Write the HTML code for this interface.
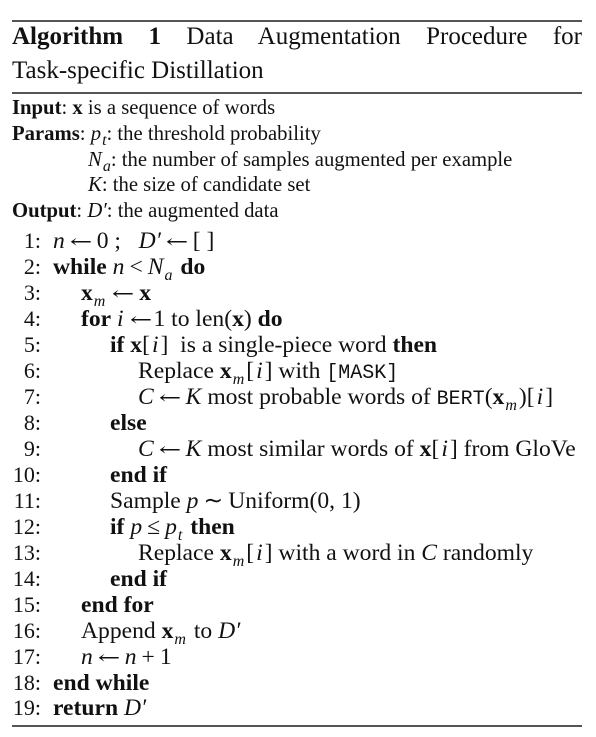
<!DOCTYPE html>
<html><head><meta charset="utf-8"><style>
body{margin:0;background:#fff;width:596px;height:737px;position:relative;overflow:hidden;font-family:"Liberation Serif",serif;color:#111;}
.r{position:absolute;left:12px;width:570px;height:2px;background:#555;}
.l{position:absolute;font-size:23.6px;line-height:26px;white-space:nowrap;}
.h{font-size:20.7px;}
.h sub{margin-right:0}
.n{position:absolute;left:0;width:41px;text-align:right;font-size:22px;line-height:26px;}
i{font-style:italic}
.m{font-family:"Liberation Mono",monospace;font-size:20px;}
b{font-weight:bold}
sub{font-size:16px;line-height:0;margin-left:1px;margin-right:2px}
.k{margin:0 2px}
.a{display:inline-block;transform:scaleX(1.4);margin:0 8px;font-family:"DejaVu Serif",serif;font-size:19px}
.o{margin:0 5px}
.t{position:absolute;left:12px;width:570px;font-size:25px;line-height:34px;}
</style></head><body>
<div class="r" style="top:20px"></div>
<div class="t" style="top:20px;text-align:justify;text-align-last:justify"><b>Algorithm 1</b> Data Augmentation Procedure for</div>
<div class="t" style="top:54px">Task-specific Distillation</div>
<div class="r" style="top:92px;height:1.5px"></div>
<div class="l h" style="left:12px;top:95px"><b>Input</b>: <b>x</b> is a sequence of words</div>
<div class="l h" style="left:12px;top:121px"><b>Params</b>: <i>p<sub>t</sub></i>: the threshold probability</div>
<div class="l h" style="left:88px;top:147px"><i>N<sub>a</sub></i>: the number of samples augmented per example</div>
<div class="l h" style="left:88px;top:172px"><i>K</i>: the size of candidate set</div>
<div class="l h" style="left:12px;top:198px"><b>Output</b>: <i>D′</i>: the augmented data</div>

<div class="n" style="top:228px">1:</div><div class="l" style="left:53px;top:228px"><i>n</i><span class="a">←</span>0 ; &nbsp;&nbsp;<i>D′</i><span class="a">←</span>[ ]</div>
<div class="n" style="top:254px">2:</div><div class="l" style="left:53px;top:254px"><b>while</b> <i>n</i><span class="o">&lt;</span><i>N<sub>a</sub></i> <b>do</b></div>
<div class="n" style="top:280px">3:</div><div class="l" style="left:81px;top:280px"><b>x</b><sub><i>m</i></sub><span class="a">←</span><b>x</b></div>
<div class="n" style="top:306px">4:</div><div class="l" style="left:81px;top:306px"><b>for</b> <i>i</i> <span class="a" style="margin-left:3px;margin-right:5px">←</span>1 to len(<b>x</b>) <b>do</b></div>
<div class="n" style="top:332px">5:</div><div class="l" style="left:110px;top:332px"><b>if x</b>[<i class="k">i</i>] &nbsp;is a single-piece word <b>then</b></div>
<div class="n" style="top:358px">6:</div><div class="l" style="left:138px;top:358px">Replace <b>x</b><sub><i>m</i></sub>[<i class="k">i</i>] with <span class="m">[MASK]</span></div>
<div class="n" style="top:384px">7:</div><div class="l" style="left:138px;top:384px"><i>C</i><span class="a">←</span><i>K</i> most probable words of <span class="m">BERT</span>(<b>x</b><sub><i>m</i></sub>)[<i class="k">i</i>]</div>
<div class="n" style="top:410px">8:</div><div class="l" style="left:110px;top:410px"><b>else</b></div>
<div class="n" style="top:436px">9:</div><div class="l" style="left:138px;top:436px"><i>C</i><span class="a">←</span><i>K</i> most similar words of <b>x</b>[<i class="k">i</i>] from GloVe</div>
<div class="n" style="top:462px">10:</div><div class="l" style="left:110px;top:462px"><b>end if</b></div>
<div class="n" style="top:488px">11:</div><div class="l" style="left:110px;top:488px">Sample <i>p</i><span class="o">∼</span>Uniform(0, 1)</div>
<div class="n" style="top:514px">12:</div><div class="l" style="left:110px;top:514px"><b>if</b> <i>p</i><span class="o">≤</span><i>p<sub>t</sub></i> <b>then</b></div>
<div class="n" style="top:540px">13:</div><div class="l" style="left:138px;top:540px">Replace <b>x</b><sub><i>m</i></sub>[<i class="k">i</i>] with a word in <i>C</i> randomly</div>
<div class="n" style="top:566px">14:</div><div class="l" style="left:110px;top:566px"><b>end if</b></div>
<div class="n" style="top:592px">15:</div><div class="l" style="left:81px;top:592px"><b>end for</b></div>
<div class="n" style="top:618px">16:</div><div class="l" style="left:81px;top:618px">Append <b>x</b><sub><i>m</i></sub> to <i>D′</i></div>
<div class="n" style="top:644px">17:</div><div class="l" style="left:81px;top:644px"><i>n</i><span class="a">←</span><i>n</i><span class="o">+</span>1</div>
<div class="n" style="top:670px">18:</div><div class="l" style="left:53px;top:670px"><b>end while</b></div>
<div class="n" style="top:695px">19:</div><div class="l" style="left:53px;top:695px"><b>return</b> <i>D′</i></div>
<div class="r" style="top:725px;height:1.5px"></div>
</body></html>
